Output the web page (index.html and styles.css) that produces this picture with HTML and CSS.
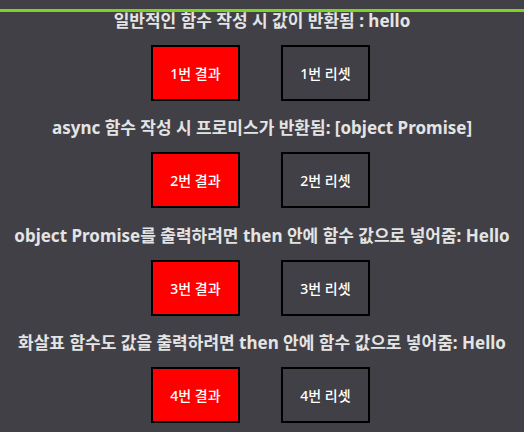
FILE: index.html
```html
<!DOCTYPE html>
<html lang="ko">
<head>
<meta charset="utf-8">
<title>Promise</title>
<link rel="stylesheet" href="styles.css">
</head>
<body>
<div class="topbar"></div>
<section class="block">
  <h3 class="title">일반적인 함수 작성 시 값이 반환됨 : hello</h3>
  <div class="row">
    <button class="btn btn-result">1번 결과</button>
    <button class="btn btn-reset">1번 리셋</button>
  </div>
</section>
<section class="block">
  <h3 class="title">async 함수 작성 시 프로미스가 반환됨: [object Promise]</h3>
  <div class="row">
    <button class="btn btn-result">2번 결과</button>
    <button class="btn btn-reset">2번 리셋</button>
  </div>
</section>
<section class="block">
  <h3 class="title">object Promise를 출력하려면 then 안에 함수 값으로 넣어줌: Hello</h3>
  <div class="row">
    <button class="btn btn-result">3번 결과</button>
    <button class="btn btn-reset">3번 리셋</button>
  </div>
</section>
<section class="block">
  <h3 class="title">화살표 함수도 값을 출력하려면 then 안에 함수 값으로 넣어줌: Hello</h3>
  <div class="row">
    <button class="btn btn-result">4번 결과</button>
    <button class="btn btn-reset">4번 리셋</button>
  </div>
</section>
</body>
</html>
```
FILE: styles.css
```css
html, body {
  margin: 0;
  padding: 0;
  background: #414046;
}
body {
  font-family: "Noto Sans", "Noto Sans CJK KR", sans-serif;
  color: #e4e4e4;
  padding-top: 9px;
}
.topbar {
  height: 3px;
  background: #7ed321;
}
.block {
  margin-bottom: 18.33px;
}
.title {
  margin: 0;
  height: 17px;
  line-height: 17px;
  font-size: 17px;
  font-weight: 700;
  text-align: center;
  white-space: nowrap;
}
.row {
  display: flex;
  justify-content: center;
  gap: 41px;
  margin-top: 16px;
  padding-right: 3px;
}
.btn {
  box-sizing: border-box;
  width: 89px;
  height: 56px;
  border: 2px solid #000;
  font-family: "Noto Sans", "Noto Sans CJK KR", sans-serif;
  font-size: 14px;
  font-weight: 500;
  color: #fff;
  padding: 0;
  cursor: pointer;
}
.btn-result {
  background: #ff0000;
}
.btn-reset {
  background: #414046;
}
```
